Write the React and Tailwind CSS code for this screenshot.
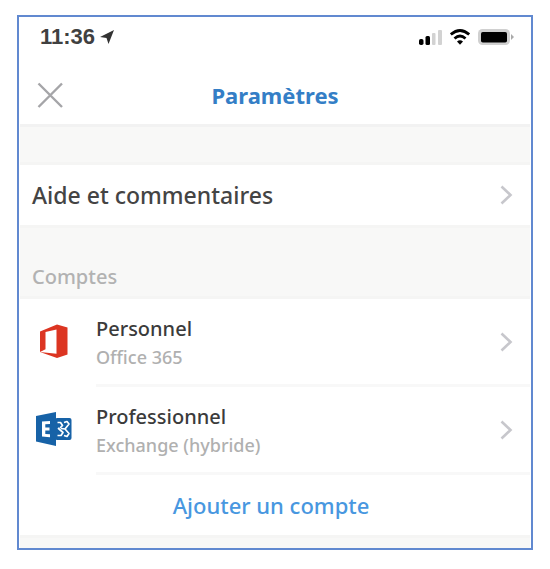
function Chevron() {
  return (
    <svg className="h-5 w-3.5 shrink-0" viewBox="0 0 14 20" fill="none" stroke="#c7c7cc" strokeWidth="2.6" aria-hidden="true">
      <path d="M1.5 1.5 10.500 10 1.500 18.500" />
    </svg>
  );
}

function OfficeLogo() {
  return (
    <svg className="h-9 w-9" viewBox="0 0 36 36" aria-hidden="true">
      <path fill="#dc3522" d="M4 8.500 21 1.500 31.500 4.500V31.500L21 35 4 29 20.500 30.800V6.500L9.500 9V26.300L4 29Z" />
    </svg>
  );
}

function ExchangeLogo() {
  return (
    <svg className="h-9 w-9" viewBox="0 0 36 36" aria-hidden="true">
      <rect x="19" y="7" width="16.500" height="22" rx="2" fill="#1762a7" />
      <g fill="none" stroke="#fff" strokeWidth="1.7" strokeLinejoin="round">
        <path d="M21.500 11.500h3l2 3-2.500 2.500M21.500 24.500h3.500l2-3-5-4.500" />
        <path d="M28 11.500 31 10.500 33 13 29 18 33 22.500 31 25.500 28 24.500M25 17.500 29 18" />
      </g>
      <path fill="#1762a7" d="M0 5 20 1v34L0 30.500Z" />
      <path fill="#fff" d="M6 10.500 14 10v3l-4.700.2v3.300h4.200v3H9.300v3.600l4.700.2v3L6 25.600Z" />
    </svg>
  );
}

function StatusIcons() {
  return (
    <div className="flex items-center gap-2" aria-hidden="true">
      <svg className="h-4 w-6" viewBox="0 0 24 16">
        <rect x="1" y="10" width="4.500" height="6" rx="1.800" />
        <rect x="7.500" y="7" width="4.500" height="9" rx="1.500" />
        <rect x="14" y="4" width="3.500" height="12" rx="1" fill="#d2d2d2" />
        <rect x="20" y="1" width="4" height="15" rx="1" fill="#d2d2d2" />
      </svg>
      <svg className="h-4 w-5" viewBox="0 0 20 16" fill="none" stroke="#000" strokeWidth="2.800">
        <path d="M.8 5.500Q10-2.500 19.200 5.500M4.500 9.500Q10 4.500 15.500 9.500" />
        <path d="M7 12.500Q10 10.200 13 12.500L10 15.800Z" fill="#000" stroke="none" />
      </svg>
      <svg className="h-4 w-9" viewBox="0 0 36 16">
        <rect x="0" y="0" width="32" height="16" rx="4.500" fill="#d0d0d0" />
        <rect x="3" y="3" width="26" height="10.500" rx="1.800" />
        <path d="M33 5 36 8 33 11Z" fill="#aaa" />
      </svg>
    </div>
  );
}

function Account({ logo, name, kind }) {
  return (
    <li className="flex">
      <button type="button" className="flex flex-1 items-stretch pl-4 text-left">
        <span className="flex w-15 items-center pb-1">{logo}</span>
        <span className="flex h-22 flex-1 items-center justify-between border-b-3 border-[#f8f8f8] pr-4">
          <span className="flex flex-col pb-0.5">
            <span className="text-xl leading-8 font-medium text-[#3b3b3b]">{name}</span>
            <span className="text-lg leading-6 font-medium text-[#b0b0b0]">{kind}</span>
          </span>
          <Chevron />
        </span>
      </button>
    </li>
  );
}

export default function App() {
  return (
    <div className="bg-white px-[17px] pt-[15px] pb-5 font-['Noto_Sans','Open_Sans',sans-serif]">
      <main className="border-2 border-[#6189d0] bg-white px-px">
        <header className="border-b-3 border-[#f2f2f2]">
          <div className="flex h-10 items-center justify-between pr-4 pl-5">
            <div className="flex items-center gap-1 font-['Liberation_Sans',sans-serif] text-[22px] leading-6 font-bold text-[#404040]">
              <time>11:36</time>
              <svg className="h-4 w-4" viewBox="0 0 16 16" fill="#333" aria-hidden="true">
                <path d="M15 1 9.500 15 7.500 9 1 8Z" />
              </svg>
            </div>
            <StatusIcons />
          </div>
          <div className="grid h-[67px] grid-cols-[1fr_auto_1fr] items-center px-4 pt-2">
            <button type="button" aria-label="Fermer" className="justify-self-start">
              <svg className="h-7 w-7" viewBox="0 0 28 28" stroke="#a5a5a8" strokeWidth="2.400" aria-hidden="true">
                <path d="M2.500 2.500 26 26M26 2.500 2.500 26" />
              </svg>
            </button>
            <h1 className="text-[22px] leading-8 font-bold text-[#347ec6]">Paramètres</h1>
          </div>
        </header>

        <div className="h-[38px] border-b-3 border-[#f5f5f4] bg-[#f8f8f7]" />

        <button type="button" className="flex h-[60px] w-full items-center justify-between pr-4 pl-3 text-left text-[23px] leading-8 font-medium text-[#444]">
          Aide et commentaires
          <Chevron />
        </button>

        <section aria-labelledby="accounts">
          <h2 id="accounts" className="h-[74px] border-y-3 border-[#f5f5f4] bg-[#f8f8f7] pt-[33px] pl-3 text-xl leading-8 font-medium text-[#b2b2b2]">
            Comptes
          </h2>
          <ul>
            <Account logo={<OfficeLogo />} name="Personnel" kind="Office 365" />
            <Account logo={<ExchangeLogo />} name="Professionnel" kind="Exchange (hybride)" />
          </ul>
          <button type="button" className="h-[60px] w-full pr-2 text-[22px] leading-8 font-medium text-[#4897e0]">
            Ajouter un compte
          </button>
        </section>

        <div className="h-[13px] border-t-3 border-[#f5f5f4] bg-[#f8f8f7]" />
      </main>
    </div>
  );
}
